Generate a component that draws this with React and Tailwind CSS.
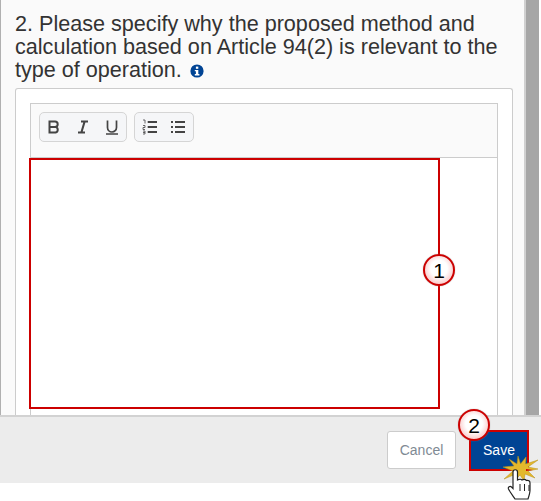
import React from 'react';

// numbered red marker placed over the screenshot
const Callout = ({ n, className }) => (
  <div className={`absolute w-[32px] h-[32px] rounded-full border-[2px] border-[#cc0000] bg-[radial-gradient(circle_at_50%_45%,#ffffff_40%,#fbd2d2_70%,#ee8f8f_100%)] flex items-center justify-center text-[21px] leading-none text-black shadow-[0_0_1px_#888] ${className}`}>
    {n}
  </div>
);

const ToolIcon = ({ children }) => (
  <svg width="16" height="16" viewBox="0 0 16 16" fill="none" stroke="#444" strokeWidth="1.7">{children}</svg>
);

const App = () => {
  return (
    <div className="w-[541px] h-[501px] bg-white overflow-hidden relative font-['Liberation_Sans',Arial,sans-serif]">
      <div className="h-[483px] flex flex-col">
        <div className="h-[415px] flex">
          {/* form area */}
          <div className="w-[524px] border-l border-l-[#b0b0b0] bg-[#fafafa] pl-[14px] pr-[11px] pt-[13px] overflow-hidden">
            <h2 className="text-[21.6px] leading-[22.9px] text-[#333] font-normal">
              2. Please specify why the proposed method and calculation based on Article 94(2) is relevant to the type of operation.
              <svg className="inline-block ml-[8px] align-[-1px]" width="14" height="14" viewBox="0 0 14 14">
                <circle cx="7" cy="7" r="6.6" fill="#004494" />
                <rect x="5.900" y="2.600" width="2.400" height="2.200" fill="#fff" />
                <path d="M4.800 6h3.500v4h1.100v1.400H4.800V10h1.100V7.300H4.800z" fill="#fff" />
              </svg>
            </h2>
            <div className="mt-[6px] h-[340px] bg-white border border-[#ccc] border-b-0 rounded-t-[3px] pl-[14px] pr-[14px] pt-[14px]">
              <div className="h-[330px] border border-[#ccc] border-b-0 bg-white">
                <div className="h-[54px] bg-[#fafafa] border-b border-[#ccc] flex items-start pt-[8px] pl-[8px] gap-[7px]">
                  <div className="h-[30px] w-[88px] rounded-[5px] border border-[#d5d5d5] bg-[#f5f6f8] flex items-center gap-[13px] pl-[6px]">
                    <ToolIcon>
                      <path d="M3.500 2.500h5.500a2.700 2.700 0 0 1 0 5.400H3.500zM3.500 7.900h6.100a2.900 2.900 0 0 1 0 5.600H3.500zM3.500 1.600v12.800" strokeWidth="2" />
                    </ToolIcon>
                    <ToolIcon>
                      <path d="M6 2.600h7M3 13.400h7M9.600 2.600 6.400 13.400" strokeWidth="2" />
                    </ToolIcon>
                    <ToolIcon>
                      <path d="M3.500 1.500v7a4.500 4.500 0 0 0 9 0v-7M2 15h12" />
                    </ToolIcon>
                  </div>
                  <div className="h-[30px] w-[60px] rounded-[5px] border border-[#d5d5d5] bg-[#f5f6f8] flex items-center gap-[12px] pl-[7px]">
                    <ToolIcon>
                      <path d="M5.700 3h9.300M5.700 8h9.300M5.700 13h9.300" strokeWidth="1.800" />
                      <path d="M1 1h2v3.500M1 6.500h2v2H1v2h2M1 12h2v3H1M1 13.500h2" strokeWidth="0.800" />
                    </ToolIcon>
                    <ToolIcon>
                      <path d="M5 3h10M5 8h10M5 13h10" strokeWidth="1.800" />
                      <path d="M1 3h2M1 8h2M1 13h2" strokeWidth="1.800" />
                    </ToolIcon>
                  </div>
                </div>
              </div>
            </div>
          </div>
          {/* scrollbar */}
          <div className="w-[2px] bg-[#d0d0d0]" />
          <div className="w-[13px] bg-[#a6a6a6]" />
        </div>
        {/* footer */}
        <div className="h-[68px] bg-[#ececec] border-t-2 border-[#d2d2d2] flex items-center justify-end pr-[12px] gap-[13px]">
          <button className="w-[69px] h-[38px] bg-white border border-[#ccc] rounded-[3px] text-[14px] text-[#7f8a94]">Cancel</button>
          <button className="w-[60px] h-[41px] bg-[#004494] border-[2px] border-[#cc0000] text-[14px] text-white">Save</button>
        </div>
      </div>

      {/* annotations over the screenshot */}
      <div className="absolute left-[29px] top-[158px] w-[411px] h-[251px] border-[2px] border-[#cc0000]" />
      <Callout n="1" className="left-[423px] top-[254px]" />
      <Callout n="2" className="left-[458px] top-[409px]" />
      <svg className="absolute left-[500px] top-[454px]" width="41" height="47" viewBox="0 0 41 47">
        <path d="M18 2 20.500 10 26 3 25.500 10 38 6 28 13 38 15 28 17 35 24 25 20 24 27 20 21 14 27 16 20 4 25 13 17 3 13 14 12 9 5 17 10Z" fill="#e3b82c" stroke="#b8901a" strokeWidth="0.500" />
        <path d="M26 15l7 1-7 1z" fill="#cc0000" />
        <path d="M15 45c-2-3-5-7-6.500-10-.8-2 1.500-3.500 3-2l1.500 1.500V18c0-3 4.500-3 4.500 0v8c2-1 3.500-1 4.500 0 2-1 3.500-.5 4.500.5 2-.5 3.500.5 3.500 2.500v7c0 3-1 6-2 9z" fill="#fff" stroke="#222" strokeWidth="1.200" />
        <path d="M20 30v7M24.500 30v7M29 31v6" stroke="#222" strokeWidth="1" />
      </svg>
    </div>
  );
};

export default App;
